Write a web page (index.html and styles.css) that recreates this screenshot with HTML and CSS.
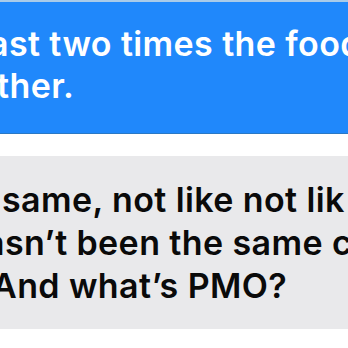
FILE: index.html
```html
<!DOCTYPE html>
<html>
<head>
<meta charset="utf-8">
<link rel="stylesheet" href="styles.css">
</head>
<body>
<div class="chat">
  <div class="bubble sent">
    <div class="line s1">ast two times the food</div>
    <div class="line s2">ther.</div>
  </div>
  <div class="bubble received">
    <div class="line r1">same, not like not lik</div>
    <div class="line r2">asn’t been the same c</div>
    <div class="line r3">And what’s PMO?</div>
  </div>
</div>
</body>
</html>
```
FILE: styles.css
```css
html, body {
  margin: 0;
  padding: 0;
  background: #ffffff;
  overflow: hidden;
}
.chat {
  width: 348px;
  height: 348px;
  overflow: hidden;
  display: flex;
  flex-direction: column;
  font-family: Inter, "Noto Sans", sans-serif;
  font-size: 34px;
  font-weight: 600;
  letter-spacing: 0.4px;
}
.bubble {
  display: flex;
  flex-direction: column;
  flex-shrink: 0;
}
.sent {
  background: #2088fb;
  color: #ffffff;
  border-top: 2px solid #a9cbe9;
  border-bottom: 1px solid #2a78c4;
  height: 134px;
  box-sizing: border-box;
  padding-top: 21px;
  line-height: 42px;
}
.received {
  margin-top: 22px;
  background: #e9e9eb;
  color: #0a0a0a;
  height: 173px;
  padding-top: 22px;
  box-sizing: border-box;
  line-height: 43px;
}
.line {
  white-space: nowrap;
}
.s1 { margin-left: -11px; }
.s2 { margin-left: -3px; }
.r1 { margin-left: 2px; }
.r2 { margin-left: -15px; }
.r3 { margin-left: -8px; }
```
